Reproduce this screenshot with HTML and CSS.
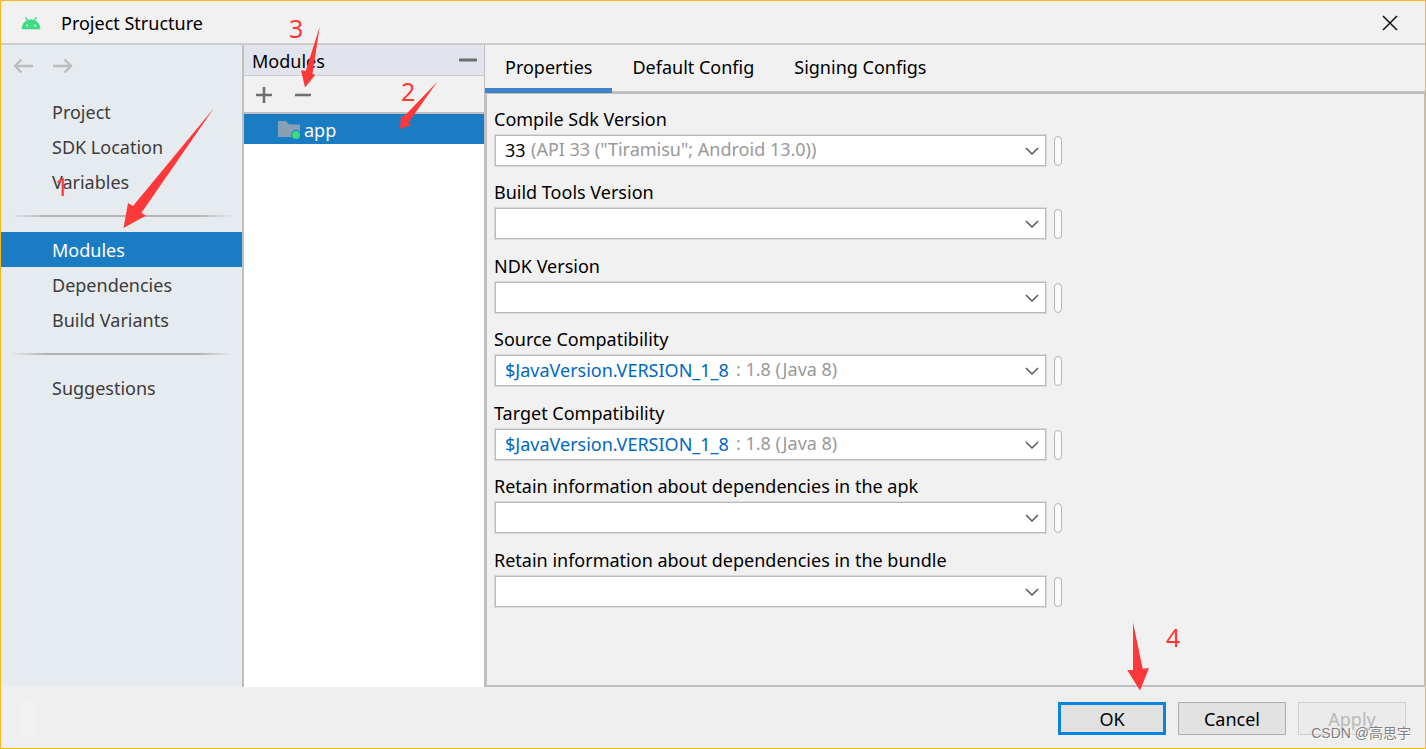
FILE: index.html
```html
<!DOCTYPE html>
<html lang="en">
<head>
  <meta charset="UTF-8" />
  <title>Project Structure</title>
  <link rel="stylesheet" href="styles.css">
</head>
<body>

  <div class="window">
    <header class="titlebar">
      <svg class="logo" width="20" height="14" viewBox="0 0 20 14">
        <path d="M1 13C1 9 3 6 6 4.600L4.300 1.600 5 1.200 6.800 4.200C8.800 3.500 11.200 3.500 13.200 4.200L15 1.200 15.700 1.600 14 4.600C17 6 19 9 19 13Z" fill="#3ddc84" stroke="#3ddc84" stroke-width="0.600" />
        <circle cx="6" cy="9.500" r="0.900" fill="#f1f1f1" />
        <circle cx="14" cy="9.500" r="0.900" fill="#f1f1f1" />
      </svg>
      <h1>Project Structure</h1>
      <button class="icon-btn close" aria-label="Close">
        <svg width="16" height="16" viewBox="0 0 16 16"><path d="M1 1L15 15M15 1L1 15" stroke="#111" stroke-width="1.500" /></svg>
      </button>
    </header>

    <div class="body">
      <nav class="sidebar">
        <div class="history">
          <button class="icon-btn" aria-label="Back">
            <svg width="20" height="16" viewBox="0 0 20 16"><path d="M20 8H2M8.500 1.500L2 8L8.500 14.500" fill="none" stroke="#bcbcbc" stroke-width="2.400" /></svg>
          </button>
          <button class="icon-btn" aria-label="Forward">
            <svg width="20" height="16" viewBox="0 0 20 16"><path d="M0 8H18M11.500 1.500L18 8L11.500 14.500" fill="none" stroke="#bcbcbc" stroke-width="2.400" /></svg>
          </button>
        </div>
        <a class="nav-item" href="#">Project</a>
        <a class="nav-item" href="#">SDK Location</a>
        <a class="nav-item" href="#">Variables</a>
        <div class="separator"></div>
        <a class="nav-item active" href="#">Modules</a>
        <a class="nav-item" href="#">Dependencies</a>
        <a class="nav-item" href="#">Build Variants</a>
        <div class="separator"></div>
        <a class="nav-item" href="#">Suggestions</a>
      </nav>

      <section class="modules">
        <div class="modules-header">
          <h2>Modules</h2>
          <button class="icon-btn" aria-label="Hide">
            <svg width="18" height="16" viewBox="0 0 18 16"><path d="M0 7H18" stroke="#6e6e6e" stroke-width="3" /></svg>
          </button>
        </div>
        <div class="toolbar">
          <button class="icon-btn" aria-label="Add module">
            <svg width="16" height="16" viewBox="0 0 16 16"><path d="M0 8H16M8 0V16" stroke="#6e6e6e" stroke-width="2.600" /></svg>
          </button>
          <button class="icon-btn" aria-label="Remove module">
            <svg width="16" height="16" viewBox="0 0 16 16"><path d="M0 8H16" stroke="#6e6e6e" stroke-width="2.600" /></svg>
          </button>
        </div>
        <a class="module active" href="#">
          <svg width="23" height="20" viewBox="0 0 23 20">
            <path d="M0 1H8L11 4.500H22V17H0Z" fill="#87a0b3" />
            <circle cx="18" cy="15" r="5" fill="#1a7dc4" />
            <circle cx="18" cy="15" r="4" fill="#3ddc84" />
          </svg>
          app
        </a>
      </section>

      <main class="main">
        <div class="tabs" role="tablist">
          <button class="tab active" role="tab" aria-selected="true">Properties</button>
          <button class="tab" role="tab">Default Config</button>
          <button class="tab" role="tab">Signing Configs</button>
        </div>

        <form class="form" id="properties">
          <div class="field">
            <label for="compileSdk">Compile Sdk Version</label>
            <div class="row">
              <div class="combo">
                <select id="compileSdk"><option>33</option></select>
                <span class="hint hint-sdk">(API 33 ("Tiramisu"; Android 13.0))</span>
                <svg class="chevron" width="14" height="8" viewBox="0 0 14 8"><path d="M1 1L7 7L13 1" /></svg>
              </div>
              <button type="button" class="extra" aria-label="Bind Compile Sdk Version"></button>
            </div>
          </div>

          <div class="field">
            <label for="buildTools">Build Tools Version</label>
            <div class="row">
              <div class="combo">
                <select id="buildTools"><option></option></select>
                <svg class="chevron" width="14" height="8" viewBox="0 0 14 8"><path d="M1 1L7 7L13 1" /></svg>
              </div>
              <button type="button" class="extra" aria-label="Bind Build Tools Version"></button>
            </div>
          </div>

          <div class="field">
            <label for="ndk">NDK Version</label>
            <div class="row">
              <div class="combo">
                <select id="ndk"><option></option></select>
                <svg class="chevron" width="14" height="8" viewBox="0 0 14 8"><path d="M1 1L7 7L13 1" /></svg>
              </div>
              <button type="button" class="extra" aria-label="Bind NDK Version"></button>
            </div>
          </div>

          <div class="field">
            <label for="sourceCompat">Source Compatibility</label>
            <div class="row">
              <div class="combo">
                <select id="sourceCompat" class="variable"><option>$JavaVersion.VERSION_1_8</option></select>
                <span class="hint hint-java">: 1.8 (Java 8)</span>
                <svg class="chevron" width="14" height="8" viewBox="0 0 14 8"><path d="M1 1L7 7L13 1" /></svg>
              </div>
              <button type="button" class="extra" aria-label="Bind Source Compatibility"></button>
            </div>
          </div>

          <div class="field">
            <label for="targetCompat">Target Compatibility</label>
            <div class="row">
              <div class="combo">
                <select id="targetCompat" class="variable"><option>$JavaVersion.VERSION_1_8</option></select>
                <span class="hint hint-java">: 1.8 (Java 8)</span>
                <svg class="chevron" width="14" height="8" viewBox="0 0 14 8"><path d="M1 1L7 7L13 1" /></svg>
              </div>
              <button type="button" class="extra" aria-label="Bind Target Compatibility"></button>
            </div>
          </div>

          <div class="field">
            <label for="retainApk">Retain information about dependencies in the apk</label>
            <div class="row">
              <div class="combo">
                <select id="retainApk"><option></option></select>
                <svg class="chevron" width="14" height="8" viewBox="0 0 14 8"><path d="M1 1L7 7L13 1" /></svg>
              </div>
              <button type="button" class="extra" aria-label="Bind apk setting"></button>
            </div>
          </div>

          <div class="field">
            <label for="retainBundle">Retain information about dependencies in the bundle</label>
            <div class="row">
              <div class="combo">
                <select id="retainBundle"><option></option></select>
                <svg class="chevron" width="14" height="8" viewBox="0 0 14 8"><path d="M1 1L7 7L13 1" /></svg>
              </div>
              <button type="button" class="extra" aria-label="Bind bundle setting"></button>
            </div>
          </div>
        </form>
      </main>
    </div>

    <footer class="footer">
      <span class="status"></span>
      <button class="btn primary">OK</button>
      <button class="btn">Cancel</button>
      <button class="btn" disabled>Apply</button>
    </footer>

    <!-- numbered steps -->
    <svg class="steps" width="1426" height="749" viewBox="0 0 1426 749">
      <path d="M123.500 228L128 203L133 206L214 108L141.500 212.700L145.700 215.700Z" />
      <path d="M400 129L401 115.700L403.700 116.700L437.300 81.700L408 123.300L411.700 124.700Z" />
      <path d="M305 87.500L301 70.300L305.700 71L319.700 26.700L312.500 74L315.300 74.700Z" />
      <path d="M1140 690.500L1127.300 670.300L1133 670V622.300L1142.700 668.700L1149 668Z" />
      <text x="55" y="196">1</text>
      <text x="401" y="101">2</text>
      <text x="289" y="38">3</text>
      <text x="1166" y="647">4</text>
    </svg>

    <span class="watermark">CSDN @高思宇</span>
  </div>

</body>
</html>
```
FILE: styles.css
```css
* {
  box-sizing: border-box;
}

body {
  margin: 0;
  font-family: 'Noto Sans', 'Noto Sans CJK SC', sans-serif;
  font-size: 18px;
  line-height: 24px;
  color: #000;
}

button,
select {
  font: inherit;
  color: inherit;
}

.window {
  position: relative;
  display: flex;
  flex-direction: column;
  min-height: 100vh;
  overflow: hidden;
  background: #f1f1f1;
  border: 1px solid #fdb813;
}

h1,
h2 {
  margin: 0;
  font-size: 18px;
  font-weight: normal;
}

.icon-btn {
  display: flex;
  padding: 0;
  border: none;
  background: none;
  cursor: pointer;
}

/* title bar */
.titlebar {
  display: flex;
  align-items: center;
  height: 44px;
  padding: 2px 27px 0 20px;
  border-bottom: 2px solid #ccc;
}

.logo {
  margin-right: 20px;
}

.close {
  margin-left: auto;
}

.body {
  display: flex;
  flex: 1;
}

/* left navigation */
.sidebar {
  width: 243px;
  flex-shrink: 0;
  background: #e6ebef;
  border-right: 2px solid #bfbfbf;
}

.history {
  display: flex;
  gap: 20px;
  height: 49px;
  padding: 13px 12px;
}

.nav-item {
  display: block;
  height: 35px;
  padding-left: 51px;
  line-height: 36px;
  color: #3c3c3c;
  text-decoration: none;
}

.nav-item.active {
  background: #1a7dc4;
  color: #fff;
}

.separator {
  height: 33px;
  padding: 16px 9px 15px;
}

.separator::before {
  content: '';
  display: block;
  height: 2px;
  background: linear-gradient(to right, transparent, #b3b3b3 16%, #b3b3b3 84%, transparent);
}

/* module list */
.modules {
  width: 241px;
  flex-shrink: 0;
  background: #fff;
  border-right: 1px solid #bfbfbf;
}

.modules-header {
  display: flex;
  align-items: center;
  justify-content: space-between;
  height: 31px;
  padding: 2px 7px 0 8px;
  background: #e1e4ed;
  border-bottom: 1px solid #ccc;
}

.toolbar {
  display: flex;
  align-items: center;
  gap: 23px;
  height: 38px;
  padding: 2px 12px 0;
  background: #f1f1f1;
  border-bottom: 2px solid #bfbfbf;
}

.module {
  display: flex;
  align-items: center;
  gap: 3px;
  height: 30px;
  padding: 2px 0 0 34px;
  color: #fff;
  text-decoration: none;
}

.module.active {
  background: #1a7dc4;
}

/* properties */
.main {
  display: flex;
  flex: 1;
  flex-direction: column;
}

.tabs {
  display: flex;
  height: 49px;
  border-bottom: 3px solid #bfbfbf;
}

.tab {
  height: 48px;
  padding: 0 20px;
  border: none;
  border-bottom: 5px solid transparent;
  background: none;
}

.tab.active {
  border-bottom-color: #4083c9;
}

.form {
  flex: 1;
  padding: 13px 7px;
  border: 2px solid #bfbfbf;
  border-top: none;
  border-right-width: 1px;
}

.field {
  max-width: 568px;
  margin-bottom: 13px;
}

.field:nth-child(even) {
  margin-bottom: 14px;
}

.field label {
  display: block;
  height: 27px;
}

.row {
  display: flex;
  align-items: center;
  gap: 7px;
}

.combo {
  position: relative;
  flex: 1;
}

.combo select {
  display: block;
  width: 100%;
  height: 33px;
  padding: 0 30px 2px 10px;
  border: 1px solid #dadada;
  border-radius: 0;
  box-shadow: inset 0 0 0 1px #bbb;
  background: #fff;
  appearance: none;
}

.combo .variable {
  color: #0068c0;
}

.hint {
  position: absolute;
  top: 3px;
  color: #999;
  pointer-events: none;
}

.hint-sdk {
  left: 37px;
}

.hint-java {
  left: 242px;
}

.chevron {
  position: absolute;
  top: 13px;
  right: 8px;
  fill: none;
  stroke: #5a5a5a;
  stroke-width: 1.5;
  pointer-events: none;
}

.extra {
  width: 8px;
  height: 30px;
  padding: 0;
  border: 1px solid #b5b5b5;
  border-radius: 4px;
  background: #fafafa;
}

/* bottom buttons */
.footer {
  display: flex;
  align-items: center;
  gap: 12px;
  height: 61px;
  padding: 2px 19px 0 18px;
  background: #efefef;
}

.status {
  width: 15px;
  height: 36px;
  margin-right: auto;
  background: #f1f1f1;
}

.btn {
  width: 108px;
  height: 33px;
  padding: 0;
  border: 1px solid #adadad;
  background: #e1e1e1;
}

.btn.primary {
  border: 3px solid #0a84e0;
}

.btn:disabled {
  border-color: #d0d0d0;
  background: #ebebeb;
  color: #b8b8b8;
}

.steps {
  position: absolute;
  top: -1px;
  left: -1px;
  fill: #fd3838;
  font-size: 25px;
  pointer-events: none;
}

.watermark {
  position: absolute;
  right: 14px;
  bottom: 3px;
  font-family: 'Liberation Sans', 'Noto Sans CJK SC', sans-serif;
  font-size: 14px;
  color: #808080;
  text-shadow: 1px 1px #fff;
}
```
